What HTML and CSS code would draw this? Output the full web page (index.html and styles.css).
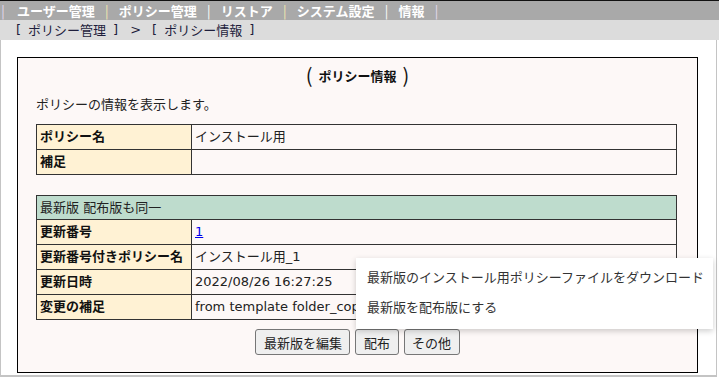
FILE: index.html
```html
<!DOCTYPE html>
<html lang="ja">
<head>
<meta charset="utf-8">
<link rel="stylesheet" href="styles.css">
</head>
<body>
<div class="nav">
  <span class="sep s1 first">|</span><span class="item">ユーザー管理</span>
  <span class="sep s2">|</span><span class="item">ポリシー管理</span>
  <span class="sep s3">|</span><span class="item">リストア</span>
  <span class="sep s2">|</span><span class="item">システム設定</span>
  <span class="sep s3">|</span><span class="item">情報</span>
  <span class="sep s1">|</span>
</div>
<div class="crumb"><span>[</span><span class="cw">ポリシー管理</span><span>]</span><span class="gt">&gt;</span><span>[</span><span class="cw">ポリシー情報</span><span>]</span></div>
<div class="main">
  <div class="panel">
    <div class="title"><span class="paren">(</span><span class="ttext">ポリシー情報</span><span class="paren">)</span></div>
    <p class="desc">ポリシーの情報を表示します。</p>
    <table class="info">
      <tr><th>ポリシー名</th><td>インストール用</td></tr>
      <tr><th>補足</th><td></td></tr>
    </table>
    <table class="info second">
      <tr><td class="head" colspan="2">最新版 配布版も同一</td></tr>
      <tr><th>更新番号</th><td><a href="#" class="link">1</a></td></tr>
      <tr><th>更新番号付きポリシー名</th><td>インストール用_1</td></tr>
      <tr><th>更新日時</th><td>2022/08/26 16:27:25</td></tr>
      <tr><th>変更の補足</th><td>from template folder_copy</td></tr>
    </table>
    <div class="buttons">
      <button class="btn">最新版を編集</button>
      <button class="btn">配布</button>
      <button class="btn">その他</button>
    </div>
  </div>
  <div class="menu">
    <div class="mitem">最新版のインストール用ポリシーファイルをダウンロード</div>
    <div class="mitem">最新版を配布版にする</div>
  </div>
</div>
</body>
</html>
```
FILE: styles.css
```css
* { box-sizing: border-box; }
html, body {
  margin: 0;
  padding: 0;
  background: #fff;
  font-family: "DejaVu Sans", "Noto Sans CJK JP", sans-serif;
  font-size: 13px;
  color: #222;
}
.nav {
  border-top: 1px solid #111;
  background: #a9a9a9;
  height: 20px;
  line-height: 18px;
  padding-left: 1px;
  color: #fff;
  font-family: "Noto Sans CJK JP", sans-serif;
  font-weight: bold;
  white-space: nowrap;
  display: flex;
  align-items: center;
}
.sep {
  font-weight: normal;
  width: 4px;
  text-align: center;
  flex: none;
  margin-right: 10px;
}
.sep.first { margin-right: 12px; }
.item { margin-right: 10px; flex: none; }
.s1 { color: #e6dcf0; }
.s2 { color: #f5e8b0; }
.s3 { color: #ffffff; }
.crumb {
  background: #dcdcdc;
  height: 20px;
  line-height: 19px;
  padding-left: 16px;
  color: #1e1e3c;
  white-space: nowrap;
  display: flex;
}
.cw { margin: 0 7px 0 7px; font-family: "Noto Sans CJK JP", sans-serif; }
.gt { margin: 0 11px 0 12px; }
.main {
  position: relative;
  width: 717px;
  height: 337px;
  border-left: 1px solid #c4c4c4;
  border-right: 1px solid #c4c4c4;
  border-bottom: 2px solid #c4c4c4;
  padding: 17px 0 0 16px;
}
.panel {
  width: 681px;
  height: 316px;
  border: 1px solid #000;
  background: #fdf8f7;
  padding: 5px 0 0 18px;
}
.title {
  height: 24px;
  display: flex;
  justify-content: center;
  align-items: center;
  gap: 6px;
  padding-right: 18px;
}
.paren { font-size: 20px; line-height: 22px; font-weight: normal; color: #111; font-family: "Noto Sans CJK JP", sans-serif; }
.ttext { font-weight: bold; color: #111; }
.desc { margin: 9px 0 0 0; line-height: 18px; }
.info {
  border-collapse: collapse;
  width: 641px;
  margin-top: 10px;
}
.info th, .info td {
  border: 1px solid #333;
  height: 25px;
  padding: 0 3px;
  text-align: left;
  line-height: 18px;
  white-space: nowrap;
  overflow: hidden;
}
.info th {
  width: 155px;
  background: #fff2d4;
  font-weight: bold;
  color: #111;
}
.info td { color: #222; }
.info td.head { background: #bedccd; height: 24px; }
.second { margin-top: 20px; }
.link { color: #0000ee; }
.buttons {
  display: flex;
  justify-content: center;
  gap: 5px;
  margin-top: 9px;
  padding-right: 18px;
}
.btn {
  font-family: "Noto Sans CJK JP", sans-serif;
  font-size: 13px;
  height: 26px;
  padding: 0 7.5px;
  background: #efefef;
  border: 1px solid #767676;
  border-radius: 3px;
  color: #222;
}
.menu {
  position: absolute;
  left: 355px;
  top: 218px;
  width: 357px;
  height: 71px;
  background: #fff;
  box-shadow: 0 2px 6px rgba(0,0,0,0.2);
  padding-top: 5px;
}
.mitem {
  height: 30px;
  line-height: 30px;
  padding-left: 11px;
  color: #333;
  white-space: nowrap;
}
```
